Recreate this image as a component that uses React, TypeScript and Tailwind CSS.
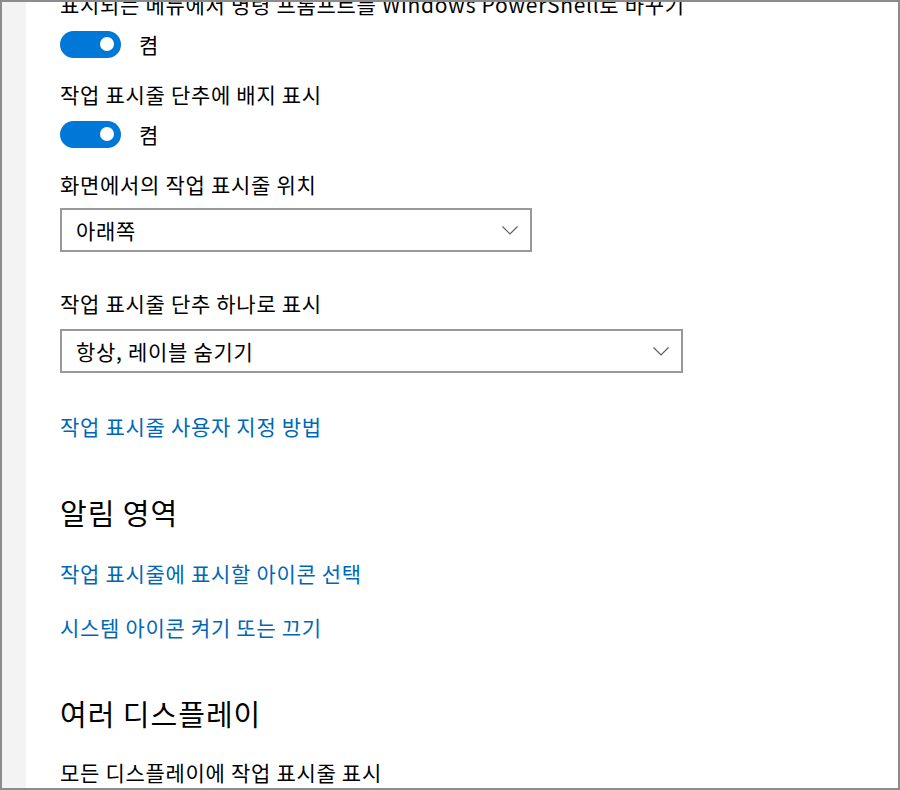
import React from "react";

const font = { fontFamily: '"Noto Sans CJK KR", "Noto Sans", sans-serif' };

const body = "text-[21px] leading-[28px] tracking-[0.7px]";
const heading = "text-[29px] leading-[40px] tracking-[1px]";

function Toggle({ className = "" }: { className?: string }) {
  return (
    <div className={`flex items-center gap-[18px] ${className}`}>
      <div className="flex h-[27px] w-[61px] items-center justify-end rounded-full bg-[#0078d7] pr-[7px]">
        <div className="h-[14px] w-[14px] rounded-full bg-white" />
      </div>
      <span className={`${body} text-black`}>켬</span>
    </div>
  );
}

function Chevron() {
  return (
    <svg width="16" height="9" viewBox="0 0 16 9" fill="none">
      <path d="M0.5 0.5 L8 8 L15.5 0.5" stroke="#5f5f5f" strokeWidth="1.2" />
    </svg>
  );
}

function Select({ value, width, className = "" }: { value: string; width: string; className?: string }) {
  return (
    <div
      className={`flex h-[44px] items-center justify-between border-2 border-[#999999] bg-white pl-[14px] pr-[12px] ${width} ${className}`}
    >
      <span className={`${body} text-black`}>{value}</span>
      <Chevron />
    </div>
  );
}

export default function App() {
  return (
    <div
      style={font}
      className="flex h-[790px] w-[900px] overflow-hidden border-2 border-[#8c8c8c] bg-white"
    >
      {/* left nav edge */}
      <div className="w-[24px] shrink-0 bg-[#f3f3f3]" />

      <div className="flex flex-col pl-[34px] text-black">
        <p className={`mt-[-12px] whitespace-nowrap ${body}`}>
          표시되는 메뉴에서 명령 프롬프트를 Windows PowerShell로 바꾸기
        </p>
        <Toggle className="mt-[12px]" />

        <p className={`mt-[22px] ${body}`}>작업 표시줄 단추에 배지 표시</p>
        <Toggle className="mt-[12px]" />

        <p className={`mt-[22px] ${body}`}>화면에서의 작업 표시줄 위치</p>
        <Select value="아래쪽" width="w-[472px]" className="mt-[10px]" />

        <p className={`mt-[37px] ${body}`}>작업 표시줄 단추 하나로 표시</p>
        <Select value="항상, 레이블 숨기기" width="w-[623px]" className="mt-[12px]" />

        <a href="#" className={`mt-[39px] ${body} text-[#0067b8]`}>
          작업 표시줄 사용자 지정 방법
        </a>

        <h2 className={`mt-[52px] ${heading}`}>알림 영역</h2>
        <a href="#" className={`mt-[27px] ${body} text-[#0067b8]`}>
          작업 표시줄에 표시할 아이콘 선택
        </a>
        <a href="#" className={`mt-[26px] ${body} text-[#0067b8]`}>
          시스템 아이콘 켜기 또는 끄기
        </a>

        <h2 className={`mt-[52px] ${heading}`}>여러 디스플레이</h2>
        <p className={`mt-[25px] ${body}`}>모든 디스플레이에 작업 표시줄 표시</p>
      </div>
    </div>
  );
}
